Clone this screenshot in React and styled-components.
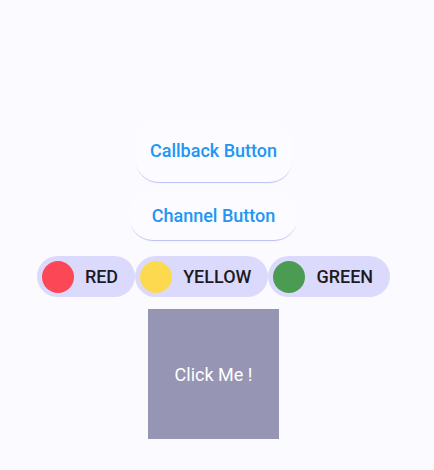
import React from "react";
import styled, { createGlobalStyle } from "styled-components";

const Global = createGlobalStyle`
  html, body { margin: 0; padding: 0; background: #fbfaff; }
  body { font-family: Roboto, "Noto Sans", sans-serif; }
`;

const Page = styled.div`
  width: 427px;
  height: 470px;
  box-sizing: border-box;
  padding-top: 118px;
  display: flex;
  flex-direction: column;
  align-items: center;
  background: #fbfaff;
`;

const PillButton = styled.button`
  all: unset;
  box-sizing: border-box;
  display: flex;
  align-items: center;
  justify-content: center;
  width: ${(p) => p.$w}px;
  height: ${(p) => p.$h}px;
  margin-top: ${(p) => p.$mt || 0}px;
  background: #fcfbff;
  border-radius: 24px;
  box-shadow: 0 2px 1px -1px rgba(140, 150, 235, 0.6);
  color: #2196f3;
  font-family: Roboto, sans-serif;
  font-size: 18px;
  font-weight: 500;
`;

const ChipRow = styled.div`
  display: flex;
  margin-top: 16px;
`;

const Chip = styled.div`
  display: flex;
  align-items: center;
  gap: 11px;
  height: 41px;
  box-sizing: border-box;
  padding: 0 17px 0 5px;
  background: #dcdafc;
  border-radius: 21px;
  font-family: Roboto, sans-serif;
  font-size: 18px;
  font-weight: 500;
  color: #1c1b1f;
`;

const Dot = styled.span`
  width: 32px;
  height: 32px;
  border-radius: 50%;
  background: ${(p) => p.$c};
`;

const Square = styled.div`
  margin-top: 12px;
  width: 131px;
  height: 130px;
  background: #9795b4;
  display: flex;
  align-items: center;
  justify-content: center;
  color: #ffffff;
  font-family: Roboto, sans-serif;
  font-size: 18px;
`;

const chips = [
  { label: "RED", color: "#fc4757" },
  { label: "YELLOW", color: "#fdd94f" },
  { label: "GREEN", color: "#4b9c52" },
];

export default function App() {
  return (
    <>
      <Global />
      <Page>
        <PillButton $w={158} $h={64}>Callback Button</PillButton>
        <PillButton $w={169} $h={50} $mt={8}>Channel Button</PillButton>
        <ChipRow>
          {chips.map((c) => (
            <Chip key={c.label}>
              <Dot $c={c.color} />
              {c.label}
            </Chip>
          ))}
        </ChipRow>
        <Square>Click Me !</Square>
      </Page>
    </>
  );
}
